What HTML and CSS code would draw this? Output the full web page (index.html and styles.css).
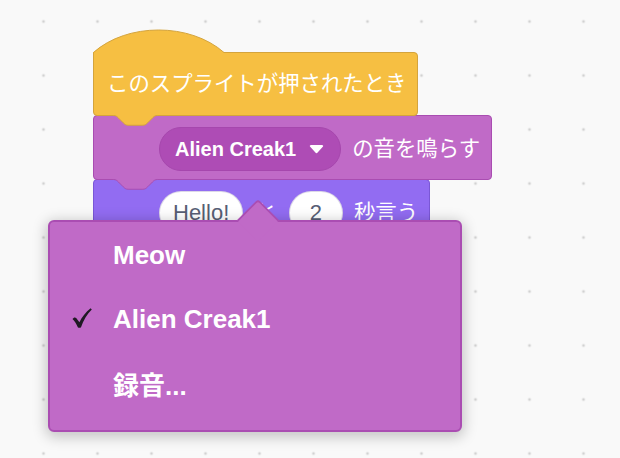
FILE: index.html
```html
<!DOCTYPE html>
<html lang="ja">
<head>
<meta charset="utf-8">
<title>Scratch blocks</title>
<link rel="stylesheet" href="styles.css">
</head>
<body>
<div class="workspace">
  <div class="script">
    <div class="block hat">
      <svg class="hat-cap" width="132" height="24" viewBox="0 0 132 24">
        <path class="cap-fill" d="M0,24 V23.5 C34.1,-6.5 96.9,-6.5 131,23.5 V24 Z"/>
        <path class="cap-line" d="M0.5,24 V23.5 C34.1,-6.5 96.9,-6.5 131,23.5"/>
      </svg>
      <div class="body">
        <span class="label">このスプライトが押されたとき</span>
        <svg class="tab" width="46" height="12" viewBox="0 0 46 12">
          <path class="tab-fill" d="M0.5,0 V0.5 c2.44,0 3.66,1.22 4.88,2.44 l4.88,4.88 c1.22,1.22 2.44,2.44 4.88,2.44 h14.64 c2.44,0 3.66,-1.22 4.88,-2.44 l4.88,-4.88 c1.22,-1.22 2.44,-2.44 4.88,-2.44 V0 Z"/>
          <path class="tab-line" d="M0.5,0.5 c2.44,0 3.66,1.22 4.88,2.44 l4.88,4.88 c1.22,1.22 2.44,2.44 4.88,2.44 h14.64 c2.44,0 3.66,-1.22 4.88,-2.44 l4.88,-4.88 c1.22,-1.22 2.44,-2.44 4.88,-2.44"/>
        </svg>
      </div>
    </div>

    <div class="block stack sound">
      <div class="body">
        <div class="dropdown">
          <span>Alien Creak1</span>
          <svg class="caret" width="15" height="9" viewBox="0 0 15 9">
            <path d="M1.2,1.8 C0.4,0.9 0.9,0 2.2,0 H12.8 C14.1,0 14.6,0.9 13.8,1.8 L8.6,7.6 C8,8.3 7,8.3 6.4,7.6 Z"/>
          </svg>
        </div>
        <span class="label">の音を鳴らす</span>
        <svg class="tab" width="46" height="12" viewBox="0 0 46 12">
          <path class="tab-fill" d="M0.5,0 V0.5 c2.44,0 3.66,1.22 4.88,2.44 l4.88,4.88 c1.22,1.22 2.44,2.44 4.88,2.44 h14.64 c2.44,0 3.66,-1.22 4.88,-2.44 l4.88,-4.88 c1.22,-1.22 2.44,-2.44 4.88,-2.44 V0 Z"/>
          <path class="tab-line" d="M0.5,0.5 c2.44,0 3.66,1.22 4.88,2.44 l4.88,4.88 c1.22,1.22 2.44,2.44 4.88,2.44 h14.64 c2.44,0 3.66,-1.22 4.88,-2.44 l4.88,-4.88 c1.22,-1.22 2.44,-2.44 4.88,-2.44"/>
        </svg>
      </div>
    </div>

    <div class="block stack looks">
      <div class="body">
        <div class="field">Hello!</div>
        <span class="label to">と</span>
        <div class="field num">2</div>
        <span class="label">秒言う</span>
      </div>
    </div>
  </div>

  <div class="menu">
    <div class="menu-arrow"></div>
    <div class="item"><span class="check"></span><span>Meow</span></div>
    <div class="item"><span class="check">
      <svg width="20" height="20" viewBox="0 0 20 20"><path d="M0.5,11 C1.5,9.5 3,9 4.2,10 L7.4,14.2 C10,9 13.8,4 18.6,0.3 L19.8,1.5 C15,6.2 11.4,12.2 9,19.3 C8.3,20 6.4,20 5.8,19.2 C4.5,16 2.8,13.2 0.5,11 Z"/></svg>
    </span><span>Alien Creak1</span></div>
    <div class="item"><span class="check"></span><span>録音...</span></div>
  </div>
</div>
</body>
</html>
```

FILE: styles.css
```css
html, body {
  margin: 0;
  padding: 0;
}

body {
  font-family: "Liberation Sans", "Noto Sans CJK JP", sans-serif;
  background: #f9f9f9;
}

.workspace {
  position: relative;
  width: 620px;
  height: 458px;
  overflow: hidden;
  background-color: #f9f9f9;
  background-image: radial-gradient(circle, #d2d2d2 0, #d2d2d2 1px, rgba(210, 210, 210, 0) 1.8px);
  background-size: 54px 54px;
  background-position: 16.5px -5.5px;
}

/* script stack placed on the canvas */
.script {
  position: absolute;
  left: 93px;
  top: 29px;
  display: flex;
  flex-direction: column;
  align-items: flex-start;
}

.block {
  position: relative;
  display: flex;
  flex-direction: column;
  align-items: flex-start;
}

.stack {
  margin-top: -1px;
}

.hat { z-index: 3; }
.sound { z-index: 2; }
.looks { z-index: 1; }

.body {
  position: relative;
  display: flex;
  align-items: center;
  box-sizing: border-box;
  border: 1px solid;
  border-radius: 4px;
}

.label {
  color: #fff;
  font-size: 21.4px;
  line-height: 22px;
  white-space: nowrap;
}

/* hat block */
.hat-cap {
  position: relative;
  z-index: 1;
  display: block;
  margin-bottom: -1px;
}

.hat .cap-fill { fill: #f6bf42; }
.hat .cap-line { fill: none; stroke: #d4a43d; stroke-width: 1; }

.hat .body {
  height: 64px;
  padding: 0 11px 0 13px;
  border-top-left-radius: 0;
  background: #f6bf42;
  border-color: #d4a43d;
}

.tab {
  position: absolute;
  left: 19px;
  top: 100%;
  overflow: visible;
}

.tab-line { fill: none; stroke-width: 1; }

.hat .tab-fill { fill: #f6bf42; }
.hat .tab-line { stroke: #d4a43d; }

/* sound block */
.sound .body {
  height: 65px;
  padding: 11px 11px 8px 65px;
  gap: 11px;
  background: #c06ac7;
  border-color: #a94db1;
}

.sound .tab-fill { fill: #c06ac7; }
.sound .tab-line { stroke: #a94db1; }

.dropdown {
  display: flex;
  align-items: center;
  box-sizing: border-box;
  height: 44px;
  padding: 0 16px 0 15px;
  border-radius: 22px;
  background: #ae4cb5;
  border: 1px solid #a647ad;
  color: #fff;
  font-weight: bold;
  font-size: 20px;
  white-space: nowrap;
}

.caret {
  margin-left: 13px;
  fill: #fff;
}

/* looks block */
.looks .body {
  height: 65px;
  padding: 11px 11px 8px 65px;
  gap: 11px;
  background: #926cf2;
  border-color: #7a57d6;
}

.field {
  display: flex;
  align-items: center;
  box-sizing: border-box;
  height: 44px;
  padding: 0 13px;
  border-radius: 22px;
  background: #fff;
  border: 1px solid rgba(60, 40, 120, 0.18);
  color: #575e75;
  font-size: 22px;
  white-space: nowrap;
}

.field.num {
  padding: 0 20px;
}

.to {
  margin: 0 1px;
}

/* dropdown menu */
.menu {
  position: absolute;
  left: 48px;
  top: 220px;
  z-index: 10;
  box-sizing: border-box;
  width: 414px;
  height: 212px;
  padding: 1px 0 15px;
  background: #c06ac7;
  border: 2px solid #aa4db2;
  border-radius: 6px;
  box-shadow: 0 3px 14px 2px rgba(0, 0, 0, 0.22);
}

.menu-arrow {
  position: absolute;
  left: 193px;
  top: -17px;
  box-sizing: border-box;
  width: 30px;
  height: 30px;
  background: #c06ac7;
  border-top: 2px solid #aa4db2;
  border-left: 2px solid #aa4db2;
  border-top-left-radius: 4px;
  transform: rotate(45deg);
}

.item {
  position: relative;
  display: flex;
  align-items: center;
  height: 64px;
  padding-left: 22px;
  color: #fff;
  font-weight: bold;
  font-size: 26px;
  white-space: nowrap;
}

.check {
  display: flex;
  align-items: center;
  width: 41px;
  height: 20px;
  margin-top: -3px;
}

.check svg {
  fill: #1f1a24;
}
```
